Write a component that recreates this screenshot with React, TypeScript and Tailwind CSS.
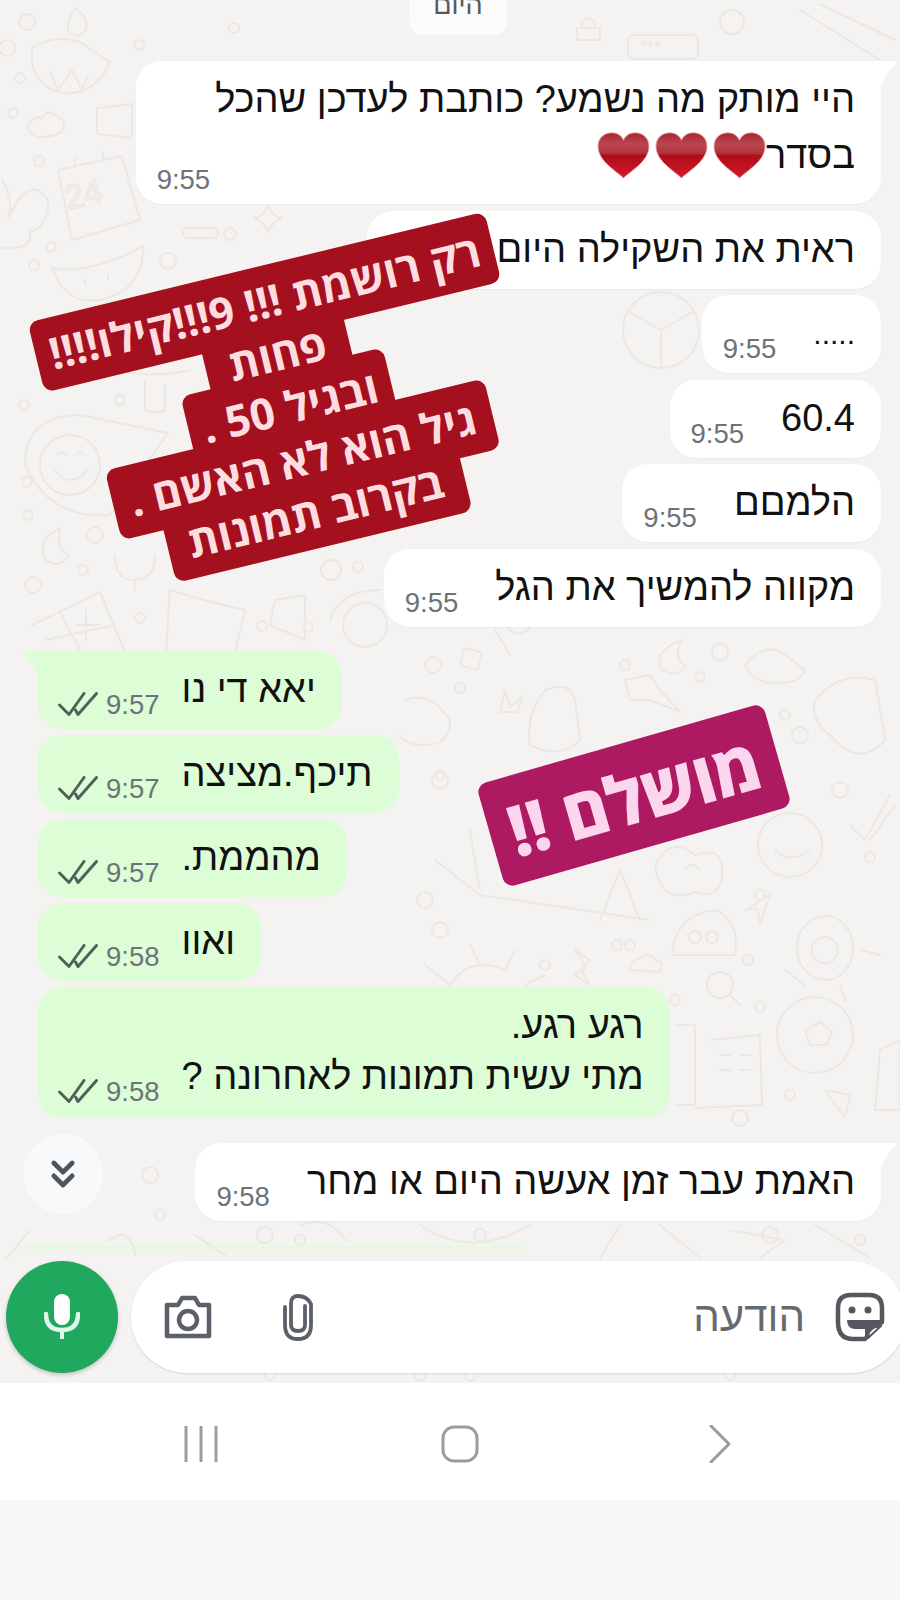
import { ChevronsDown } from 'lucide-react'

function Checks() {
  return (
    <svg width="40" height="24" viewBox="0 0 40 24" fill="none" stroke="#4f5f59" strokeWidth="2.9" strokeLinecap="round" strokeLinejoin="round" className="shrink-0 mb-[3px]">
      <path d="M1.5 13 L11 22.5 L26 1.5" />
      <path d="M17.5 18 L20 22.5 L38.5 1.5" />
    </svg>
  )
}

function Time({ value }: { value: string }) {
  return <span className="text-[27.5px] leading-[28px] text-[#6d7378] shrink-0">{value}</span>
}

function Incoming({ time, children, textClass = '', gap = 'gap-[37px]', tail }: { time: string; children: React.ReactNode; textClass?: string; gap?: string; tail?: boolean }) {
  return (
    <div className={`relative flex items-end ${gap} bg-white rounded-[26px] ${tail ? 'rounded-tr-[2px]' : ''} pl-[21px] pr-[26px] pt-[13px] pb-[10px] shadow-[0_1px_1px_rgba(0,0,0,0.04)]`}>
      <Time value={time} />
      <div dir="rtl" className={`text-[38px] leading-[51px] text-[#111] pb-[4px] ${textClass}`}>{children}</div>
      {tail && <svg width="18" height="30" viewBox="0 0 18 30" className="absolute top-0 -right-[16px]"><path d="M0 0 H15 Q18 0 16 3 Q6 12 0 30 Z" fill="#fff" /></svg>}
    </div>
  )
}

function Outgoing({ time, children, tail, last }: { time: string; children: React.ReactNode; tail?: boolean; last?: boolean }) {
  return (
    <div className={`relative flex items-end bg-[#dcfdd6] rounded-[24px] ${tail ? 'rounded-tl-[2px]' : ''} pl-[20px] pr-[26px] pt-[13px] ${last ? 'pb-[12px]' : 'pb-[10px]'}`}>
      <Checks />
      <span className="ml-[8px] mr-[22px] flex"><Time value={time} /></span>
      <div dir="rtl" className="text-[38px] leading-[51px] text-[#111] pb-[4px]">{children}</div>
      {tail && <svg width="18" height="30" viewBox="0 0 18 30" className="absolute top-0 -left-[16px]"><path d="M18 0 H3 Q0 0 2 3 Q12 12 18 30 Z" fill="#dcfdd6" /></svg>}
    </div>
  )
}

function Heart({ id }: { id: string }) {
  return (
    <svg width="53" height="47" viewBox="0 0 52 46" className="shrink-0">
      <defs>
        <linearGradient id={id} x1="0" y1="0" x2="0" y2="1">
          <stop offset="0" stopColor="#a9252f" />
          <stop offset="0.25" stopColor="#bb4650" />
          <stop offset="0.46" stopColor="#b0303a" />
          <stop offset="0.5" stopColor="#b00c19" />
          <stop offset="1" stopColor="#d3192a" />
        </linearGradient>
      </defs>
      <path d="M26 45 C17 37 1 28 1 14 C1 5 8 0.8 14.5 0.8 C20 0.8 24 3.5 26 8 C28 3.5 32 0.8 37.5 0.8 C44 0.8 51 5 51 14 C51 28 35 37 26 45 Z" fill={`url(#${id})`} stroke="#e6a3a8" strokeWidth="0.8" />
    </svg>
  )
}

function Doodles() {
  const dots = [
    [27, 22, 8], [7, 48, 8], [20, 78, 5], [13, 113, 5], [39, 161, 5], [34, 265, 5], [51, 247, 5], [168, 261, 8], [139, 45, 5], [234, 28, 5], [230, 234, 6],
    [24, 405, 5], [120, 400, 5], [28, 515, 5], [27, 482, 5], [95, 535, 8], [83, 570, 5], [33, 585, 8], [140, 618, 5], [262, 626, 5], [308, 627, 5], [331, 570, 10], [358, 567, 5],
    [433, 665, 8], [460, 688, 5], [720, 652, 8], [625, 665, 5], [700, 677, 5], [440, 775, 5], [440, 780, 8], [800, 735, 8], [785, 715, 5], [840, 790, 8], [870, 857, 5],
    [425, 900, 8], [440, 930, 8], [760, 895, 5], [630, 945, 5], [545, 965, 5], [617, 945, 5], [748, 960, 5], [675, 1000, 5], [760, 1007, 5], [790, 1095, 5], [740, 1118, 8],
    [150, 1175, 8], [160, 1215, 5], [265, 1235, 8], [300, 1240, 5], [480, 1235, 6], [770, 1235, 8], [860, 1240, 5], [270, 1375, 5], [420, 1375, 6], [470, 1376, 5], [730, 1375, 5],
  ]
  return (
    <svg width="900" height="1383" viewBox="0 0 900 1383" fill="none" stroke="#ece7e3" strokeWidth="2" strokeLinecap="round" strokeLinejoin="round" className="absolute top-0 left-0">
      {dots.map(([x, y, r], i) => <circle key={i} cx={x} cy={y} r={r} />)}
      {/* lamp */}
      <path d="M32 48 Q28 84 62 93 Q96 96 110 62 L80 42 Q55 34 32 48 Z M50 72 L58 90 L72 70 L82 90 L88 74" />
      <path d="M76 8 Q92 22 84 32 Q76 40 68 30 Q66 20 76 8 Z" />
      {/* cloud, box */}
      <path d="M36 137 Q24 130 30 122 Q36 116 42 118 Q48 108 56 116 Q68 120 62 132 Q50 138 36 137 Z" />
      <path d="M97 108 L132 104 V138 L97 134 Z" />
      {/* calendar */}
      <path d="M58 170 L122 156 L140 220 L72 240 Z M75 165 V158 M103 158 V152" />
      <text x="68" y="210" fontFamily="Liberation Sans" fontSize="34" stroke="#ece7e3" fill="none" strokeWidth="1.5" transform="rotate(-14 68 210)">24</text>
      {/* flower */}
      <path d="M2 180 Q14 200 8 218 Q30 172 48 200 Q50 225 30 232 Q34 250 2 248" />
      {/* watermelon */}
      <path d="M52 268 Q90 275 143 246 Q145 290 100 300 Q65 305 52 268 Z M85 280 L85 284 M108 275 L108 279" />
      {/* star, pill */}
      <path d="M268 206 Q272 216 282 218 Q272 222 268 232 Q264 222 254 218 Q264 216 268 206 Z" />
      <rect x="183" y="228" width="35" height="10" rx="5" />
      {/* lock, bubble, sun, wheel */}
      <path d="M577 28 H600 V40 H577 Z M582 28 V22 Q588 15 595 22 V28" />
      <rect x="628" y="35" width="70" height="24" rx="6" />
      <text x="640" y="53" fontFamily="Liberation Sans" fontSize="18" stroke="none" fill="#ece7e3">***</text>
      <circle cx="732" cy="22" r="12" />
      <path d="M800 10 L880 60 M820 4 L895 40" />
      <circle cx="661" cy="330" r="38" />
      <path d="M661 330 V368 M661 330 L628 311 M661 330 L694 311" />
      {/* smiley */}
      <circle cx="70" cy="465" r="30" />
      <path d="M55 470 Q70 490 88 470 M58 455 Q62 450 66 455 M76 455 Q80 450 84 455 M25 465 Q25 415 80 415 L168 433 L110 515 Q50 520 25 465 Z" />
      {/* moon, u, calculator */}
      <path d="M60 528 Q36 540 46 560 Q58 570 70 555 Q56 552 60 528 Z" />
      <path d="M115 555 Q115 580 135 580 Q155 580 155 555 M135 580 V590" />
      <path d="M32 625 L100 592 L128 660 M60 612 L80 650 M45 640 L115 625 M86 610 V640 M75 625 H100" />
      <path d="M170 590 Q200 600 245 610 L232 665 H165 Z" />
      <circle cx="365" cy="625" r="22" />
      <path d="M330 620 Q340 590 380 590 M275 600 L305 595 V640 L270 625 Z" />
      {/* popsicle */}
      <path d="M145 380 V410 Q155 415 165 410 V385 M125 372 Q155 378 190 370" />
      {/* pin, moon, hand */}
      <path d="M505 626 Q520 640 530 628 M510 655 L495 630" />
      <rect x="462" y="650" width="18" height="18" transform="rotate(15 471 659)" />
      <path d="M682 640 Q655 650 660 668 Q675 680 686 666 Q672 660 682 640 Z" />
      <path d="M745 665 Q765 640 785 655 L805 670 Q800 685 770 683 Q750 680 745 665 Z" />
      {/* dumpling, flower, gift */}
      <path d="M405 700 Q430 690 450 720 Q450 745 425 745 Q405 745 400 735" />
      <path d="M505 690 L510 708 L522 696 L518 712 L500 712 Z" />
      <path d="M545 690 Q570 680 575 700 L580 740 Q560 760 530 745 Q525 715 545 690 Z" />
      <path d="M625 680 L650 675 L660 690 L680 712 L650 700 L630 700 Z" />
      {/* cap */}
      <path d="M815 700 Q840 670 875 680 L885 740 Q860 770 830 735 Q810 720 815 700 Z" />
      {/* boat + foliage */}
      <path d="M470 830 L480 890 M435 860 Q460 880 480 895 L650 920 M600 920 L620 870 L640 920" />
      {/* egg, face, check */}
      <path d="M655 865 Q670 835 695 855 Q725 845 722 875 Q720 900 695 892 Q660 905 655 865 Z" />
      <path d="M685 870 Q690 860 700 870" />
      <circle cx="790" cy="845" r="32" />
      <path d="M775 850 Q790 865 810 850" />
      <path d="M850 825 L865 840 L890 795 M870 840 L895 805" />
      {/* plane, blob, turtle */}
      <path d="M745 910 L770 895 L760 925 L757 908 Z" />
      <path d="M672 955 Q675 915 715 910 Q740 920 735 955 Z" />
      <circle cx="695" cy="937" r="6" /><circle cx="712" cy="937" r="6" />
      <ellipse cx="825" cy="948" rx="28" ry="32" />
      <circle cx="825" cy="950" r="13" />
      <path d="M785 970 L805 985 M862 950 L880 955 M840 985 L845 1000" />
      {/* sun */}
      <path d="M450 985 Q470 955 505 970 L515 950 M425 965 L450 985 M470 945 L480 965 M525 985 L545 975" />
      <path d="M575 950 L590 960 L582 972 L590 985 L575 975 L585 965 Z" />
      <path d="M630 970 Q628 962 640 958 Q648 950 655 960 Q665 960 660 972 Z" />
      <circle cx="720" cy="985" r="13" />
      <path d="M730 995 L740 1005" />
      {/* ball, building, plane */}
      <circle cx="815" cy="1035" r="38" />
      <path d="M805 1030 L820 1022 L832 1032 L826 1045 L810 1045 Z M880 1050 L900 1040 V1110 H875 Z" />
      <path d="M675 1025 H695 V1105 H675 M710 1040 L760 1035 L762 1105 L695 1108 M720 1055 H730 M740 1055 H750 M720 1070 H730 M740 1070 H750" />
      <path d="M825 1090 L850 1095 L845 1118 Z" />
      {/* lower band */}
      <path d="M30 1230 Q10 1255 5 1260 M110 1240 Q130 1225 135 1255 M195 1235 L225 1255 M300 1225 Q330 1215 345 1240 M420 1225 Q470 1260 530 1225 M620 1225 L600 1258 M660 1225 L700 1258 M730 1230 L785 1240 L760 1258 M815 1225 L870 1258" />
    </svg>
  )
}

function ComposerIcons() {
  return (
    <>
      <svg width="48" height="44" viewBox="0 0 48 44" fill="none" stroke="#5c6068" strokeWidth="4.5" strokeLinejoin="round" className="ml-[33px] shrink-0">
        <path d="M3 10 H14 L18 3 H31 L35 10 H45 V41 H3 Z" />
        <circle cx="24" cy="25" r="9" />
      </svg>
      <svg width="32" height="48" viewBox="0 0 32 48" fill="none" stroke="#5c6068" strokeWidth="3.8" strokeLinecap="round" className="ml-[70px] shrink-0">
        <path d="M23 13 V32 Q23 38 16 38 Q9 38 9 32 V10 Q9 3 16 3 Q25 3 29 11 V32 Q29 46 16 46 Q3 46 3 32 V14" />
      </svg>
    </>
  )
}

export default function App() {
  return (
    <div className="w-[900px] h-[1600px] overflow-hidden bg-[#f7f7f8] font-['Liberation_Sans',sans-serif]">
      <div className="relative h-[1383px] overflow-hidden bg-[#f5f3f1] flex flex-col">
        <Doodles />

        <div className="relative flex flex-col flex-1">
          <div className="self-center ml-[16px] -mt-[25px] h-[60px] w-[98px] bg-[#fbfbfb] rounded-[14px] flex items-center justify-center">
            <span dir="rtl" className="text-[27px] text-[#555a5e] leading-none">היום</span>
          </div>

          <div className="mt-[26px] pr-[19px] flex flex-col items-end gap-[6.5px]">
            <Incoming time="9:55" gap="gap-[5px]" textClass="pb-[9px]" tail>
              <div>היי מותק מה נשמע? כותבת לעדכן שהכל</div>
              <div className="flex items-center h-[60px]">
                <span>בסדר</span>
                <Heart id="h1" /><span className="w-[5px]" /><Heart id="h2" /><span className="w-[5px]" /><Heart id="h3" />
              </div>
            </Incoming>
            <Incoming time="9:55" gap="gap-[55px]">ראית את השקילה היום</Incoming>
            <Incoming time="9:55"><span className="block h-[51px] text-[30px]">.....</span></Incoming>
            <Incoming time="9:55">60.4</Incoming>
            <Incoming time="9:55">הלמםם</Incoming>
            <Incoming time="9:55">מקווה להמשיך את הגל</Incoming>
          </div>

          <div className="mt-[24px] pl-[38px] flex flex-col items-start gap-[6px]">
            <Outgoing time="9:57" tail>יאא די נו</Outgoing>
            <Outgoing time="9:57">תיכף.מציצה</Outgoing>
            <Outgoing time="9:57">מהממת.</Outgoing>
            <Outgoing time="9:58">ואוו</Outgoing>
            <Outgoing time="9:58" last>
              <div>רגע רגע.</div>
              <div>מתי עשית תמונות לאחרונה ?</div>
            </Outgoing>
          </div>

          <div className="mt-[25px] pr-[19px] flex justify-end">
            <Incoming time="9:58" tail>האמת עבר זמן אעשה היום או מחר</Incoming>
          </div>

          <div className="mt-auto mb-[10px] pl-[6px] flex items-center gap-[13px]">
            <div className="w-[112px] h-[112px] shrink-0 rounded-full bg-[#21a85f] shadow-[0_2px_4px_rgba(0,0,0,0.2)] flex items-center justify-center">
              <svg width="36" height="46" viewBox="0 0 36 46" className="shrink-0">
                <rect x="10" y="0" width="16" height="31" rx="8" fill="#fff" />
                <path d="M2 20 Q2 36 18 36 Q34 36 34 20" fill="none" stroke="#dff7e8" strokeWidth="4.5" strokeLinecap="round" />
                <rect x="16" y="35" width="4" height="10" fill="#dff7e8" />
              </svg>
            </div>
            <div className="w-[775px] h-[112px] shrink-0 bg-white rounded-full shadow-[0_1px_2px_rgba(0,0,0,0.12)] flex items-center">
              <ComposerIcons />
              <span dir="rtl" className="ml-auto text-[42px] text-[#666a70] leading-none">הודעה</span>
              <svg width="50" height="50" viewBox="0 0 50 50" fill="none" stroke="#55595f" strokeWidth="4.5" strokeLinejoin="round" className="ml-[30px] mr-[21px] shrink-0">
                <path d="M16 3 H34 Q47 3 47 16 V30 L30 47 H18 Q3 47 3 30 V16 Q3 3 16 3 Z" />
                <circle cx="17" cy="18" r="3.5" fill="#55595f" stroke="none" />
                <circle cx="33" cy="18" r="3.5" fill="#55595f" stroke="none" />
                <path d="M13 29 H46 L31 46 V36 H20 Q14 36 13 29 Z" fill="#55595f" strokeWidth="2" />
                <path d="M33 46 Q33 35 46 34 Z" fill="#fff" strokeWidth="2" />
              </svg>
            </div>
          </div>
        </div>

        {/* scroll to bottom */}
        <div className="absolute left-[23px] top-[1134px] w-[80px] h-[80px] rounded-full bg-[#f8f9fb] flex items-center justify-center text-[#4f555c]">
          <ChevronsDown size={44} strokeWidth={2.6} />
        </div>

        {/* bubble peeking out under the last message */}
        <div className="absolute left-[20px] top-[1246px] w-[505px] h-[3px] bg-[#dcfdd6] opacity-60" />

        {/* red sticker */}
        <div dir="rtl" className="absolute left-[40px] top-[263px] w-[500px] h-[288px] -rotate-[13.65deg] flex flex-col items-center font-['Open_Sans','Liberation_Sans',sans-serif] font-bold text-[43.5px] leading-none text-[#fddde0]">
          <div className="w-[470px] h-[72px] shrink-0 bg-[#a5101f] rounded-[10px] flex items-center justify-center whitespace-nowrap">רק רושמת !!! 9!!!קילו!!!!</div>
          <div className="w-[146px] h-[72px] shrink-0 -mt-[18px] bg-[#a5101f] flex items-center justify-center whitespace-nowrap">פחות</div>
          <div className="w-[208px] h-[72px] shrink-0 -mt-[18px] bg-[#a5101f] rounded-[10px] flex items-center justify-center whitespace-nowrap">ובגיל 50 .</div>
          <div className="w-[390px] h-[72px] shrink-0 -mt-[18px] bg-[#a5101f] rounded-[10px] flex items-center justify-center whitespace-nowrap">גיל הוא לא האשם .</div>
          <div className="w-[305px] h-[72px] shrink-0 -mt-[18px] bg-[#a5101f] rounded-[10px] flex items-center justify-center whitespace-nowrap">בקרוב תמונות</div>
        </div>

        {/* magenta sticker */}
        <div dir="rtl" className="absolute left-[485px] top-[742px] w-[298px] h-[107px] -rotate-[16deg] bg-[#ad1a62] rounded-[10px] flex items-center justify-center font-['Open_Sans','Liberation_Sans',sans-serif] font-bold text-[68px] leading-none whitespace-nowrap text-[#fbd6ec] [-webkit-text-stroke:2px_#fbd6ec]">
          מושלם !!
        </div>
      </div>

      {/* android nav bar */}
      <div className="h-[117px] bg-white flex items-center pt-[5px]">
        <svg width="34" height="36" viewBox="0 0 34 36" stroke="#9a9ca0" strokeWidth="3" className="ml-[184px] shrink-0">
          <path d="M2 0 V36 M17 0 V36 M32 0 V36" />
        </svg>
        <svg width="38" height="38" viewBox="0 0 38 38" fill="none" stroke="#9a9ca0" strokeWidth="3" className="ml-[223px] shrink-0">
          <rect x="2" y="2" width="34" height="34" rx="11" />
        </svg>
        <svg width="22" height="38" viewBox="0 0 22 38" fill="none" stroke="#9a9ca0" strokeWidth="3" strokeLinecap="round" strokeLinejoin="round" className="ml-[230px] shrink-0">
          <path d="M2 1 L20 19 L2 37" />
        </svg>
      </div>
      <div className="h-[100px] bg-[#f7f7f8]" />
    </div>
  )
}
